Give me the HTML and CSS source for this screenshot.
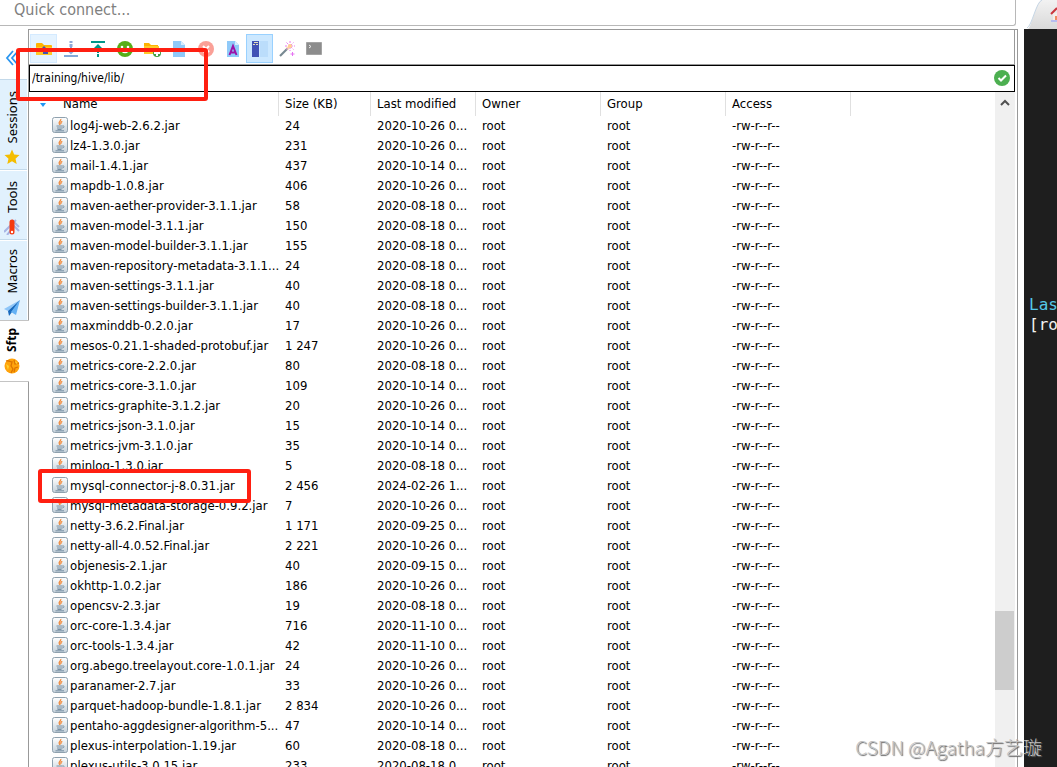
FILE: index.html
```html
<!DOCTYPE html>
<html lang="en">
<head>
<meta charset="utf-8">
<title>SFTP browser</title>
<link rel="stylesheet" href="styles.css">
</head>
<body>
<svg class="defs" aria-hidden="true">
  <defs>
    <linearGradient id="jarbg" x1="0" y1="0" x2="0" y2="1"><stop offset="0" stop-color="#fff"/><stop offset="1" stop-color="#c3d0da"/></linearGradient>
    <symbol id="jar" viewBox="0 0 16 16">
      <rect x=".5" y=".5" width="15" height="15" rx="2" fill="url(#jarbg)" stroke="#8fa1ae"/>
      <path d="M8.800 2c.5 2-2.600 2.800-1.500 4.800.3.600.7 1 .7 1.200M10.300 4.400c-1.600.8-1.800 1.600-1.200 2.600" fill="none" stroke="#f08a3c" stroke-width="1.300"/>
      <path d="M4.500 9h6M5 11h5M5.500 12.500h4M10.500 9c2.300-.5 2 1.800-.3 2M3.500 13.800h8.500" fill="none" stroke="#7890a3"/>
    </symbol>
  </defs>
</svg>
<div class="app">
  <main class="left">
    <div class="quick"><input class="quick-input" type="text" placeholder="Quick connect..." aria-label="Quick connect"></div>
    <div class="work">
      <nav class="side">
        <button class="collapse" aria-label="Collapse sidebar"><svg width="14" height="16" viewBox="0 0 14 16"><path d="M8 1 2 8l6 7M13 1 7 8l6 7" fill="none" stroke="#2b96ef" stroke-width="1.800"/></svg></button>
        <button class="tab sessions"><svg width="16" height="16" viewBox="0 0 16 16"><path d="m8 .5 2.200 5 5.300.6-4 3.600 1.200 5.300L8 12.300 3.300 15l1.200-5.300-4-3.600 5.300-.6z" fill="#f4bd00"/></svg><span>Sessions</span></button>
        <button class="tab tools"><svg width="16" height="16" viewBox="0 0 16 16"><path d="m0 13 12-12M3 16 8 10M8 5l7 7M8 1l7 7" stroke="#a7b4e4" stroke-width="2"/><path d="M8 3v10" stroke="#f53910" stroke-width="5" stroke-linecap="round"/><circle cx="8" cy="13" r="1.200" fill="#fff"/></svg><span>Tools</span></button>
        <button class="tab macros"><svg width="16" height="16" viewBox="0 0 16 16"><path d="M16 0 0 9l4 2z" fill="#8dc5f8"/><path d="M16 0 4 11l1 5 3-4z" fill="#1769bd"/><path d="m16 0-9 12 5 3z" fill="#64b1f4"/></svg><span>Macros</span></button>
        <button class="tab sftp"><svg width="16" height="16" viewBox="0 0 16 16"><circle cx="8" cy="8" r="7.500" fill="#ffa30b"/><path d="M2 3c3-1 4 1 6 1l-1 4 2 3-2 4M10 2l1 4 4-1M14 9l-3 1-1 4" stroke="#dc7400" stroke-width="1.300" fill="none"/><path d="M2 6l3 2-1 4zM11 3l3 2-2 1z" fill="#ffd234"/></svg><span>Sftp</span></button>
      </nav>
      <section class="panel">
        <div class="inner">
          <div class="toolbar">
            <button class="tool hover" aria-label="Parent folder"><svg width="16" height="16" viewBox="0 0 16 16"><path d="M0 3q0-1 1-1h5l2 2h7q1 0 1 1v9H0z" fill="#ffb300"/><path d="M0 6h16v8H0z" fill="#ffc928"/><path d="M7 13V9H4l4-4 4 4H9v2h3v2z" fill="#4052b5"/></svg></button>
            <button class="tool" aria-label="Download"><svg width="16" height="16" viewBox="0 0 16 16"><path d="M8 0v2M8 3v3" stroke="#8fa9d7" stroke-width="3"/><path d="M8 6v4M4 8l4 4 4-4" stroke="#8fa9d7" stroke-width="2" fill="none"/><path d="M1 15h14" stroke="#84a9d8" stroke-width="2"/></svg></button>
            <button class="tool" aria-label="Upload"><svg width="16" height="16" viewBox="0 0 16 16"><path d="M1 1h14M8 5v7M8 13v3" stroke="#009688" stroke-width="2"/><path d="m3 8 5-5 5 5z" fill="#009688"/></svg></button>
            <button class="tool" aria-label="Refresh"><svg width="16" height="16" viewBox="0 0 16 16"><circle cx="8" cy="8" r="8" fill="#57ad18"/><circle cx="5" cy="6" r="1.300" fill="#fff"/><circle cx="11" cy="6" r="1.300" fill="#fff"/><path d="M4 9q4 5 8 0" fill="none" stroke="#fff" stroke-width="1.700"/></svg></button>
            <button class="tool" aria-label="New folder"><svg width="18" height="16" viewBox="0 0 18 16"><path d="M1 2h5l2 2h7v9H1z" fill="#ffb300"/><path d="M1 5h15v8H1z" fill="#ffca2a"/><circle cx="14" cy="12" r="4" fill="#43a047"/><path d="M14 9v6M11 12h6" stroke="#fff" stroke-width="2"/></svg></button>
            <button class="tool" aria-label="New file"><svg width="14" height="16" viewBox="0 0 14 16"><path d="M1 0h8l4 4v12H1z" fill="#90caf9"/><path d="M9 0v4h4z" fill="#d6edff"/></svg></button>
            <button class="tool" aria-label="Delete"><svg width="16" height="16" viewBox="0 0 16 16"><circle cx="8" cy="8" r="8" fill="#faa097"/><path d="m5 5 6 6m0-6-6 6" stroke="#fff" stroke-width="2"/></svg></button>
            <button class="tool" aria-label="Rename"><svg width="14" height="16" viewBox="0 0 14 16"><path d="M1 0h8l4 4v12H1z" fill="#90caf9"/><path d="M9 0v4h4z" fill="#d6edff"/><path d="M3.500 14 7 5l3.500 9M4.500 11.500h5" fill="none" stroke="#9c13a8" stroke-width="2"/></svg></button>
            <button class="tool active" aria-label="Toggle view"><svg width="18" height="16" viewBox="0 0 18 16"><path d="M1 0h7v16H1z" fill="#3f51b5"/><path d="M3 1.500h4M2 3.500h2M5 3.500h2" stroke="#e6e0b8" stroke-width="1"/><path d="M9 0h8v16H9z" fill="#bbddfb"/></svg></button>
            <button class="tool" aria-label="Permissions"><svg width="16" height="16" viewBox="0 0 16 16"><path d="m1 15 8-8" stroke="#778992" stroke-width="2.200"/><path d="m8 8 2-2" stroke="#ffe6a0" stroke-width="2.500"/><path d="M11 0v10M6 5h10M7.500 1.500l7 7M7.500 8.500l7-7" stroke="#ea7bf0" stroke-dasharray="2 1"/><circle cx="11" cy="5" r="2" fill="#ffd28e"/><path d="M13.500 11v4M11.500 13h4" stroke="#e573f2"/></svg></button>
            <button class="tool" aria-label="Open terminal"><svg width="16" height="16" viewBox="0 0 16 16"><path d="M.5 1.500h15v12H.5z" fill="#8c8c8c" stroke="#a3a3a3"/><path d="m3 4 2 1.500L3 7" fill="none" stroke="#eee"/></svg></button>
          </div>
          <div class="path"><input class="path-input" type="text" value="/training/hive/lib/" aria-label="Remote path"><svg width="16" height="16" viewBox="0 0 16 16"><circle cx="8" cy="8" r="8" fill="#4caf50"/><path d="m4.500 8 2.500 2.500L12 5.500" fill="none" stroke="#fff" stroke-width="2"/></svg></div>
          <div class="list">
            <table class="files">
              <colgroup><col class="c-name"><col class="c-size"><col class="c-date"><col class="c-std"><col class="c-std"><col class="c-std"><col></colgroup>
              <thead><tr><th class="h-name"><svg class="sort" width="6" height="4" viewBox="0 0 6 4"><path d="M0 0h6L3 4z" fill="#2196f3"/></svg>Name</th><th>Size (KB)</th><th>Last modified</th><th>Owner</th><th>Group</th><th>Access</th><td></td></tr></thead>
              <tbody>
<tr><td><svg class="jar"><use href="#jar"/></svg>log4j-web-2.6.2.jar</td><td>24</td><td>2020-10-26 0...</td><td>root</td><td>root</td><td>-rw-r--r--</td></tr>
<tr><td><svg class="jar"><use href="#jar"/></svg>lz4-1.3.0.jar</td><td>231</td><td>2020-10-26 0...</td><td>root</td><td>root</td><td>-rw-r--r--</td></tr>
<tr><td><svg class="jar"><use href="#jar"/></svg>mail-1.4.1.jar</td><td>437</td><td>2020-10-14 0...</td><td>root</td><td>root</td><td>-rw-r--r--</td></tr>
<tr><td><svg class="jar"><use href="#jar"/></svg>mapdb-1.0.8.jar</td><td>406</td><td>2020-10-26 0...</td><td>root</td><td>root</td><td>-rw-r--r--</td></tr>
<tr><td><svg class="jar"><use href="#jar"/></svg>maven-aether-provider-3.1.1.jar</td><td>58</td><td>2020-08-18 0...</td><td>root</td><td>root</td><td>-rw-r--r--</td></tr>
<tr><td><svg class="jar"><use href="#jar"/></svg>maven-model-3.1.1.jar</td><td>150</td><td>2020-08-18 0...</td><td>root</td><td>root</td><td>-rw-r--r--</td></tr>
<tr><td><svg class="jar"><use href="#jar"/></svg>maven-model-builder-3.1.1.jar</td><td>155</td><td>2020-08-18 0...</td><td>root</td><td>root</td><td>-rw-r--r--</td></tr>
<tr><td><svg class="jar"><use href="#jar"/></svg>maven-repository-metadata-3.1.1...</td><td>24</td><td>2020-08-18 0...</td><td>root</td><td>root</td><td>-rw-r--r--</td></tr>
<tr><td><svg class="jar"><use href="#jar"/></svg>maven-settings-3.1.1.jar</td><td>40</td><td>2020-08-18 0...</td><td>root</td><td>root</td><td>-rw-r--r--</td></tr>
<tr><td><svg class="jar"><use href="#jar"/></svg>maven-settings-builder-3.1.1.jar</td><td>40</td><td>2020-08-18 0...</td><td>root</td><td>root</td><td>-rw-r--r--</td></tr>
<tr><td><svg class="jar"><use href="#jar"/></svg>maxminddb-0.2.0.jar</td><td>17</td><td>2020-10-26 0...</td><td>root</td><td>root</td><td>-rw-r--r--</td></tr>
<tr><td><svg class="jar"><use href="#jar"/></svg>mesos-0.21.1-shaded-protobuf.jar</td><td>1 247</td><td>2020-10-26 0...</td><td>root</td><td>root</td><td>-rw-r--r--</td></tr>
<tr><td><svg class="jar"><use href="#jar"/></svg>metrics-core-2.2.0.jar</td><td>80</td><td>2020-08-18 0...</td><td>root</td><td>root</td><td>-rw-r--r--</td></tr>
<tr><td><svg class="jar"><use href="#jar"/></svg>metrics-core-3.1.0.jar</td><td>109</td><td>2020-10-14 0...</td><td>root</td><td>root</td><td>-rw-r--r--</td></tr>
<tr><td><svg class="jar"><use href="#jar"/></svg>metrics-graphite-3.1.2.jar</td><td>20</td><td>2020-10-26 0...</td><td>root</td><td>root</td><td>-rw-r--r--</td></tr>
<tr><td><svg class="jar"><use href="#jar"/></svg>metrics-json-3.1.0.jar</td><td>15</td><td>2020-10-14 0...</td><td>root</td><td>root</td><td>-rw-r--r--</td></tr>
<tr><td><svg class="jar"><use href="#jar"/></svg>metrics-jvm-3.1.0.jar</td><td>35</td><td>2020-10-14 0...</td><td>root</td><td>root</td><td>-rw-r--r--</td></tr>
<tr><td><svg class="jar"><use href="#jar"/></svg>minlog-1.3.0.jar</td><td>5</td><td>2020-08-18 0...</td><td>root</td><td>root</td><td>-rw-r--r--</td></tr>
<tr><td><svg class="jar"><use href="#jar"/></svg>mysql-connector-j-8.0.31.jar</td><td>2 456</td><td>2024-02-26 1...</td><td>root</td><td>root</td><td>-rw-r--r--</td></tr>
<tr><td><svg class="jar"><use href="#jar"/></svg>mysql-metadata-storage-0.9.2.jar</td><td>7</td><td>2020-10-26 0...</td><td>root</td><td>root</td><td>-rw-r--r--</td></tr>
<tr><td><svg class="jar"><use href="#jar"/></svg>netty-3.6.2.Final.jar</td><td>1 171</td><td>2020-09-25 0...</td><td>root</td><td>root</td><td>-rw-r--r--</td></tr>
<tr><td><svg class="jar"><use href="#jar"/></svg>netty-all-4.0.52.Final.jar</td><td>2 221</td><td>2020-10-26 0...</td><td>root</td><td>root</td><td>-rw-r--r--</td></tr>
<tr><td><svg class="jar"><use href="#jar"/></svg>objenesis-2.1.jar</td><td>40</td><td>2020-09-15 0...</td><td>root</td><td>root</td><td>-rw-r--r--</td></tr>
<tr><td><svg class="jar"><use href="#jar"/></svg>okhttp-1.0.2.jar</td><td>186</td><td>2020-10-26 0...</td><td>root</td><td>root</td><td>-rw-r--r--</td></tr>
<tr><td><svg class="jar"><use href="#jar"/></svg>opencsv-2.3.jar</td><td>19</td><td>2020-08-18 0...</td><td>root</td><td>root</td><td>-rw-r--r--</td></tr>
<tr><td><svg class="jar"><use href="#jar"/></svg>orc-core-1.3.4.jar</td><td>716</td><td>2020-11-10 0...</td><td>root</td><td>root</td><td>-rw-r--r--</td></tr>
<tr><td><svg class="jar"><use href="#jar"/></svg>orc-tools-1.3.4.jar</td><td>42</td><td>2020-11-10 0...</td><td>root</td><td>root</td><td>-rw-r--r--</td></tr>
<tr><td><svg class="jar"><use href="#jar"/></svg>org.abego.treelayout.core-1.0.1.jar</td><td>24</td><td>2020-10-26 0...</td><td>root</td><td>root</td><td>-rw-r--r--</td></tr>
<tr><td><svg class="jar"><use href="#jar"/></svg>paranamer-2.7.jar</td><td>33</td><td>2020-10-26 0...</td><td>root</td><td>root</td><td>-rw-r--r--</td></tr>
<tr><td><svg class="jar"><use href="#jar"/></svg>parquet-hadoop-bundle-1.8.1.jar</td><td>2 834</td><td>2020-10-26 0...</td><td>root</td><td>root</td><td>-rw-r--r--</td></tr>
<tr><td><svg class="jar"><use href="#jar"/></svg>pentaho-aggdesigner-algorithm-5...</td><td>47</td><td>2020-10-14 0...</td><td>root</td><td>root</td><td>-rw-r--r--</td></tr>
<tr><td><svg class="jar"><use href="#jar"/></svg>plexus-interpolation-1.19.jar</td><td>60</td><td>2020-08-18 0...</td><td>root</td><td>root</td><td>-rw-r--r--</td></tr>
<tr><td><svg class="jar"><use href="#jar"/></svg>plexus-utils-3.0.15.jar</td><td>233</td><td>2020-08-18 0...</td><td>root</td><td>root</td><td>-rw-r--r--</td></tr>
              </tbody>
            </table>
            <div class="scroll"><svg width="10" height="7" viewBox="0 0 10 7"><path d="m1 6 4-4 4 4" fill="none" stroke="#505050" stroke-width="2"/></svg><div class="thumb"></div></div>
          </div>
        </div>
      </section>
    </div>
  </main>
  <aside class="terminal">
    <svg class="home" width="33" height="29" viewBox="0 0 33 29"><defs><linearGradient id="tabbg" x1="0" y1="0" x2="0" y2="1"><stop offset="0" stop-color="#f2f2f2"/><stop offset="1" stop-color="#d9d9d9"/></linearGradient></defs><path d="M4 29C8 26 12 2 18 0h15v29z" fill="url(#tabbg)"/><path d="M3 28C8 26 12 2 18 0" fill="none" stroke="#c5d5e4"/><path d="M29 13h4v9h-4z" fill="#f6eee8"/><path d="m27 14 6-6" stroke="#c9353c" stroke-width="2"/><path d="M31 16h2v5h-2z" fill="#f08a62"/><path d="M27 21h6" stroke="#b8bdf0" stroke-width="2"/></svg>
    <pre class="screen"><span class="cyan">Last</span>
[root</pre>
  </aside>
</div>
<div class="mark mark-path"></div>
<div class="mark mark-file"></div>
<div class="watermark">CSDN @Agatha方艺璇</div>
</body>
</html>
```
FILE: styles.css
```css
* { box-sizing: border-box; }
body { margin: 0; background: #fff; color: #000; font: 12px "DejaVu Sans Condensed", "Noto Sans", sans-serif; }
button, input { font: inherit; color: inherit; margin: 0; padding: 0; border: 0; background: none; border-radius: 0; outline: 0; }
svg { display: block; flex: none; }
.defs { position: absolute; width: 0; height: 0; }
.app { display: flex; height: 100vh; overflow: hidden; }
.left { flex: 1; min-width: 0; display: flex; flex-direction: column; padding-right: 6px; }
.quick { height: 26px; flex: none; margin-right: 2px; margin-bottom: 3px; border: 1px solid #b8b8b8; border-width: 0 1px 1px 0; border-radius: 0 0 3px 0; }
.quick-input { display: block; width: 100%; height: 18px; padding-left: 14px; font-size: 16px; }
.quick-input::placeholder { color: #808080; opacity: 1; }
.work { flex: 1; min-height: 0; display: flex; }
.side { width: 28px; flex: none; display: flex; flex-direction: column; }
.collapse { height: 50px; padding: 8px 0 0 5px; display: flex; align-items: center; }
.tab { display: flex; flex-direction: column-reverse; align-items: center; justify-content: flex-start; gap: 6px; width: 27px; padding: 0 3px 4px 0; background: #e1f1fd; border-bottom: 1px solid #c3d9ea; margin-bottom: 1px; }
.tab span { writing-mode: vertical-rl; transform: rotate(180deg); font-family: "Noto Sans", sans-serif; font-size: 13px; line-height: 18px; }
.sessions { height: 91px; border-top: 1px solid #c3d9ea; }
.tools { height: 69px; }
.macros { height: 79px; margin-bottom: 0; border-bottom: 0; }
.sftp { height: 62px; width: 29px; margin-right: -1px; margin-bottom: 0; padding: 0 5px 7px 0; background: #fff; border: 1px solid #c4c4c4; border-width: 1px 0; position: relative; }
.tab.sftp span { font-weight: bold; font-size: 12px; }
.panel { flex: 1; min-width: 0; display: flex; border: 1px solid #999; border-bottom: 0; padding-right: 2px; }
.inner { flex: 1; min-width: 0; display: flex; flex-direction: column; }
.toolbar { height: 35px; flex: none; display: flex; padding: 4px 0 0 1px; border-right: 1px solid #999; border-bottom: 1px solid #999; }
.tool { width: 27px; height: 29px; display: flex; align-items: center; justify-content: center; border: 1px solid transparent; }
.tool.hover { background: #e5f3ff; border-color: #d4eaff; }
.tool.active { background: #cce8ff; border-color: #99d1ff; }
.path { height: 27px; flex: none; display: flex; align-items: flex-start; border: 1px solid #000; padding: 4px 4px 0 0; }
.path-input { flex: 1; min-width: 0; height: 15px; padding: 0 2px; }
.list { flex: 1; min-height: 0; display: flex; overflow: hidden; }
.files { flex: 1; width: 0; height: 0; table-layout: fixed; border-collapse: separate; border-spacing: 0; font-size: 13px; }
.c-name { width: 250px; }
.c-size { width: 92px; }
.c-date { width: 105px; }
.c-std { width: 125px; }
.files th, .files td { height: 20px; padding: 0 0 0 6px; font-weight: normal; text-align: left; white-space: nowrap; line-height: 20px; overflow: hidden; }
.files th { height: 24px; line-height: 24px; font-size: 13px; border-right: 1px solid #e0e0e0; }
.files .h-name { padding-left: 11px; }
.sort { display: inline-block; margin-right: 17px; vertical-align: middle; }
.files td:first-child { padding-left: 23px; }
.jar { display: inline-block; width: 16px; height: 16px; margin-right: 2px; vertical-align: -3px; }
.scroll { width: 20px; flex: none; background: #f0f0f0; display: flex; flex-direction: column; align-items: center; padding-top: 7px; }
.thumb { width: 100%; height: 79px; margin-top: 505px; flex: none; background: #cdcdcd; border-right: 1px solid #f0f0f0; }
.terminal { width: 33px; flex: none; background: #1e1e1e; overflow: hidden; }
.home { background: #fff; }
.screen { margin: 0; padding: 266px 0 0 5px; font: 16px/20px "DejaVu Sans Mono", monospace; color: #f2f2f2; }
.cyan { color: #55c8e8; }
.mark { position: absolute; border: 4px solid #ff1f11; border-radius: 3px; pointer-events: none; }
.mark-path { left: 16px; top: 48px; width: 192px; height: 53px; }
.mark-file { left: 38px; top: 469px; width: 213px; height: 34px; }
.watermark { position: absolute; right: 15px; bottom: 7px; font: 300 19px/27px "Noto Sans CJK SC", sans-serif; color: #c2c2c2; text-shadow: 1px 1px 1px #666; }
```
